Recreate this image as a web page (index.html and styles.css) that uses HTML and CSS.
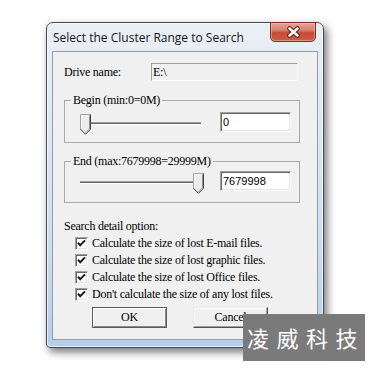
FILE: index.html
```html
<!DOCTYPE html>
<html>
<head>
<meta charset="utf-8">
<link rel="stylesheet" href="styles.css">
</head>
<body>
<div class="window">
  <div class="titlebar"><span class="title">Select the Cluster Range to Search</span></div>
  <div class="close">
    <svg width="46" height="20" viewBox="0 0 46 20">
      <path d="M19.5 6.5 L27.5 13.5 M27.5 6.5 L19.5 13.5" stroke="#5b1d15" stroke-width="4.6" stroke-linecap="round" fill="none"/>
      <path d="M19.5 6.5 L27.5 13.5 M27.5 6.5 L19.5 13.5" stroke="#ffffff" stroke-width="2.6" stroke-linecap="round" fill="none"/>
    </svg>
  </div>
  <div class="client">
    <div class="drive-row">
      <span class="drive-label">Drive name:</span>
      <div class="drive-field">E:\</div>
    </div>

    <fieldset class="group group-begin">
      <legend>Begin (min:0=0M)</legend>
      <div class="range-row">
        <div class="slider">
          <div class="track"></div>
          <svg class="thumb thumb-min" width="11" height="21" viewBox="0 0 11 21">
            <polygon points="0,0 11,0 11,15 5.5,20.5 0,15" fill="#ececec"/>
            <polyline points="0.5,15.2 0.5,0.5 10.5,0.5" fill="none" stroke="#a0a0a0"/>
            <polyline points="1.5,14.8 1.5,1.5 9.5,1.5" fill="none" stroke="#ffffff"/>
            <polyline points="10.5,0.5 10.5,15.2 5.5,20.3 0.5,15.2" fill="none" stroke="#404040"/>
            <polyline points="9.5,1.5 9.5,14.8 5.5,18.8" fill="none" stroke="#909090"/>
          </svg>
        </div>
        <div class="edit">0</div>
      </div>
    </fieldset>

    <fieldset class="group group-end">
      <legend>End (max:7679998=29999M)</legend>
      <div class="range-row">
        <div class="slider">
          <div class="track"></div>
          <svg class="thumb thumb-max" width="11" height="21" viewBox="0 0 11 21">
            <polygon points="0,0 11,0 11,15 5.5,20.5 0,15" fill="#ececec"/>
            <polyline points="0.5,15.2 0.5,0.5 10.5,0.5" fill="none" stroke="#a0a0a0"/>
            <polyline points="1.5,14.8 1.5,1.5 9.5,1.5" fill="none" stroke="#ffffff"/>
            <polyline points="10.5,0.5 10.5,15.2 5.5,20.3 0.5,15.2" fill="none" stroke="#404040"/>
            <polyline points="9.5,1.5 9.5,14.8 5.5,18.8" fill="none" stroke="#909090"/>
          </svg>
        </div>
        <div class="edit">7679998</div>
      </div>
    </fieldset>

    <div class="opt-title">Search detail option:</div>
    <div class="checks">
      <div class="check-row"><span class="cb"><svg width="11" height="11" viewBox="0 0 11 11"><polyline points="2,4.8 4.2,7.2 9,2.4" fill="none" stroke="#1a1a1a" stroke-width="2"/></svg></span><span>Calculate the size of lost E-mail files.</span></div>
      <div class="check-row"><span class="cb"><svg width="11" height="11" viewBox="0 0 11 11"><polyline points="2,4.8 4.2,7.2 9,2.4" fill="none" stroke="#1a1a1a" stroke-width="2"/></svg></span><span>Calculate the size of lost graphic files.</span></div>
      <div class="check-row"><span class="cb"><svg width="11" height="11" viewBox="0 0 11 11"><polyline points="2,4.8 4.2,7.2 9,2.4" fill="none" stroke="#1a1a1a" stroke-width="2"/></svg></span><span>Calculate the size of lost Office files.</span></div>
      <div class="check-row"><span class="cb"><svg width="11" height="11" viewBox="0 0 11 11"><polyline points="2,4.8 4.2,7.2 9,2.4" fill="none" stroke="#1a1a1a" stroke-width="2"/></svg></span><span>Don't calculate the size of any lost files.</span></div>
    </div>

    <div class="buttons">
      <div class="btn btn-default">OK</div>
      <div class="btn">Cancel</div>
    </div>
  </div>
</div>
<div class="watermark">凌威科技</div>
</body>
</html>
```
FILE: styles.css
```css
html, body {
  margin: 0;
}
body {
  background: #ffffff;
  padding: 22px 0 0 46px;
  width: 380px;
  height: 373px;
  box-sizing: border-box;
  overflow: hidden;
}

.window {
  position: relative;
  box-sizing: border-box;
  width: 278px;
  height: 326px;
  border: 1px solid #3f4b58;
  border-radius: 7px 7px 4px 4px;
  padding: 0 5px 7px 5px;
  background: linear-gradient(180deg, #eaeff4 0%, #e1e8f0 30%, #cddcec 70%, #b7cee7 100%);
  box-shadow: 3px 4px 9px rgba(0, 0, 0, 0.55), inset 0 0 0 1px rgba(255, 255, 255, 0.7);
  display: flex;
  flex-direction: column;
}

.titlebar {
  height: 28px;
  flex: none;
  display: flex;
  align-items: center;
  padding-left: 1px;
  font-family: "Open Sans", "Noto Sans", sans-serif;
  font-size: 12px;
  color: #151515;
}

.close {
  position: absolute;
  top: -1px;
  right: 7px;
  width: 46px;
  height: 20px;
  box-sizing: border-box;
  border: 1px solid #7e2f25;
  border-radius: 0 0 5px 5px;
  background: linear-gradient(180deg, #e6a497 0%, #d9806e 40%, #c44a35 55%, #c9604a 100%);
  box-shadow: inset 0 0 0 1px rgba(255, 200, 190, 0.45);
}
.close svg {
  position: absolute;
  left: -1px;
  top: -1px;
}

.client {
  box-sizing: border-box;
  height: 289px;
  flex: none;
  border: 1px solid #8d9eb0;
  background: #f0f0f0;
  font-family: "Liberation Serif", "Times New Roman", serif;
  font-size: 12px;
  letter-spacing: -0.25px;
  color: #000;
}

.drive-row {
  display: flex;
  align-items: center;
  height: 18px;
  margin: 11px 0 0 11px;
}
.drive-label {
  width: 87px;
  flex: none;
}
.drive-field {
  box-sizing: border-box;
  width: 147px;
  height: 18px;
  border: 1px solid;
  border-color: #a0a0a0 #ffffff #ffffff #a0a0a0;
  padding-left: 1px;
  line-height: 16px;
}

.group {
  box-sizing: border-box;
  width: 236px;
  min-width: 0;
  margin: 0 0 0 11px;
  border: 1px solid #aaaaaa;
  padding: 0;
}
.group legend {
  padding: 0 2px;
  margin-left: 6px;
  line-height: 13px;
}
.group-begin {
  margin-top: 13px;
  padding: 5px 0 8px 0;
}
.group-end {
  margin-top: 12px;
  padding: 3px 0 9px 0;
}

.range-row {
  display: flex;
  align-items: flex-start;
}
.slider {
  position: relative;
  flex: none;
  width: 124px;
  height: 22px;
  margin-left: 14px;
}
.track {
  position: absolute;
  left: 1px;
  top: 10px;
  width: 121px;
  height: 1px;
  background: #6a6a6a;
  border-top: 1px solid #a0a0a0;
  border-bottom: 1px solid #ffffff;
}
.thumb {
  position: absolute;
  top: 2px;
}
.thumb-min {
  left: 1px;
}
.thumb-max {
  left: 114px;
}

.edit {
  box-sizing: border-box;
  flex: none;
  margin-left: 17px;
  width: 71px;
  height: 20px;
  border: 1px solid;
  border-color: #a0a0a0 #ffffff #ffffff #a0a0a0;
  box-shadow: inset 1px 1px 0 #696969, inset -1px -1px 0 #e3e3e3;
  background: #ffffff;
  padding-left: 2px;
  font-family: "Liberation Sans", Arial, sans-serif;
  font-size: 11px;
  letter-spacing: 0;
  line-height: 18px;
}

.opt-title {
  margin: 17px 0 0 11px;
  line-height: 13px;
}

.checks {
  margin-top: 4px;
}
.check-row {
  display: flex;
  align-items: flex-start;
  height: 17px;
  margin-left: 22px;
  line-height: 13px;
}
.cb {
  box-sizing: border-box;
  flex: none;
  width: 13px;
  height: 13px;
  margin-right: 4px;
  border: 1px solid;
  border-color: #a0a0a0 #ffffff #ffffff #a0a0a0;
  box-shadow: inset 1px 1px 0 #696969, inset -1px -1px 0 #e3e3e3;
  background: #ffffff;
  display: flex;
}

.buttons {
  display: flex;
  gap: 26px;
  margin: 2px 0 0 39px;
}
.btn {
  box-sizing: border-box;
  width: 75px;
  height: 21px;
  border: 1px solid;
  border-color: #e8e8e8 #505050 #505050 #e8e8e8;
  box-shadow: inset -1px -1px 0 #a0a0a0, inset 1px 1px 0 #ffffff;
  background: #f0f0f0;
  display: flex;
  align-items: center;
  justify-content: center;
  line-height: 13px;
}
.btn-default {
  border-color: #5a5a5a;
  box-shadow: inset 1px 1px 0 #ffffff, inset -1px -1px 0 #8a8a8a;
}

.watermark {
  position: absolute;
  left: 243px;
  top: 314px;
  width: 122px;
  height: 47px;
  box-sizing: border-box;
  padding-left: 4px;
  background: #7a7a7a;
  color: #ffffff;
  font-family: "Noto Sans CJK TC", "Noto Sans CJK SC", sans-serif;
  font-size: 22px;
  letter-spacing: 7.5px;
  line-height: 47px;
  white-space: nowrap;
}
```
